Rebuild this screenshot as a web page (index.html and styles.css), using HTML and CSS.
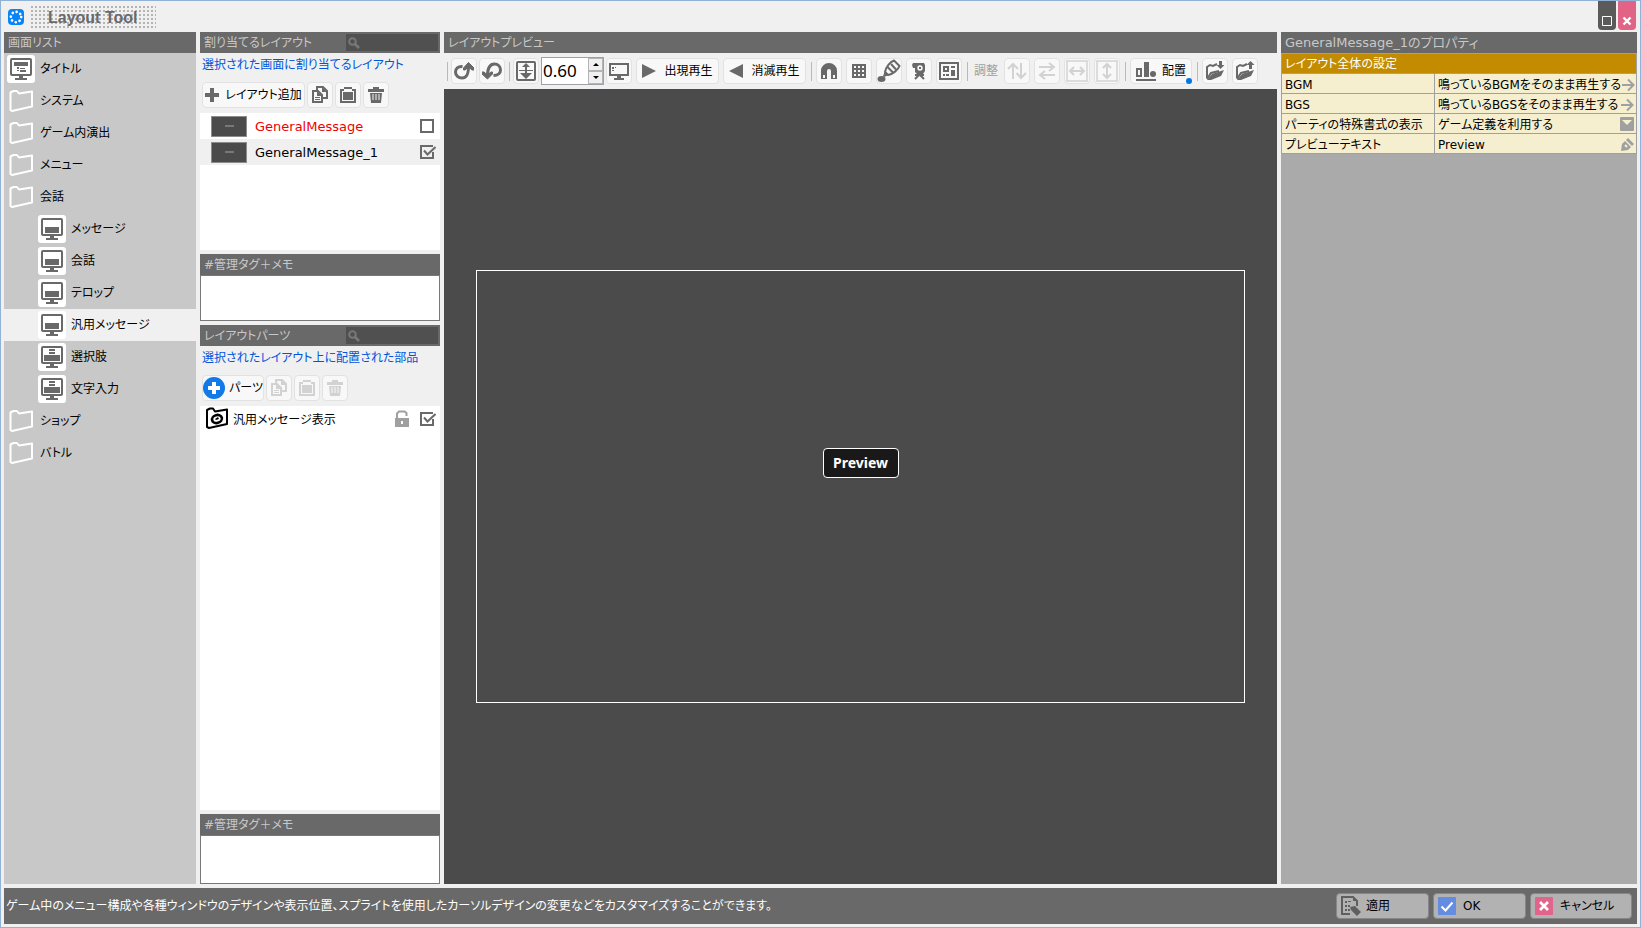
FILE: index.html
```html
<!DOCTYPE html>
<html lang="ja">
<head>
    <meta charset="UTF-8">
    <meta name="viewport" content="width=device-width, initial-scale=1.0">
    <title>Layout Tool</title>
    <link rel="stylesheet" href="styles.css">
</head>
<body>

    <!-- Icon set -->
    <svg class="icon-defs" aria-hidden="true">
        <symbol id="i-folder" viewBox="0 0 24 24">
            <path d="M1.500 3.500l3-1.500h3.500l2 2.500 13-2v15L3 22l-1.500-1z" fill="none" stroke="currentColor" stroke-width="2" stroke-linejoin="round"/>
        </symbol>
        <symbol id="i-title" viewBox="0 0 24 24">
            <rect x="2" y="2" width="20" height="16" rx="1" fill="none" stroke="currentColor" stroke-width="2"/>
            <path d="M5 5h14v4H5zM8 10h2v2H8zM11 11h5v1h-5zM8 13h2v1H8zM11 13h6v2h-6zM10 19h4v2h4v2H6v-2h4z" fill="currentColor"/>
        </symbol>
        <symbol id="i-screen" viewBox="0 0 24 24">
            <rect x="2" y="2" width="20" height="16" rx="1" fill="none" stroke="currentColor" stroke-width="2"/>
            <path d="M5 10h14v6H5zM10 19h4v2h4v2H6v-2h4z" fill="currentColor"/>
        </symbol>
        <symbol id="i-choice" viewBox="0 0 24 24">
            <rect x="2" y="2" width="20" height="16" rx="1" fill="none" stroke="currentColor" stroke-width="2"/>
            <path d="M9 4h6v2H9zM9 7h6v2H9zM4 10h16v6H4zM10 19h4v2h4v2H6v-2h4z" fill="currentColor"/>
        </symbol>
        <symbol id="i-search" viewBox="0 0 12 12">
            <circle cx="4.500" cy="4.500" r="3.300" fill="none" stroke="currentColor" stroke-width="2"/>
            <path d="M7 7l4 4" stroke="currentColor" stroke-width="2.600"/>
        </symbol>
        <symbol id="i-plus" viewBox="0 0 14 14">
            <path d="M5 0h4v5h5v4H9v5H5V9H0V5h5z" fill="currentColor"/>
        </symbol>
        <symbol id="i-plus-round" viewBox="0 0 22 22">
            <circle cx="11" cy="11" r="11" fill="#127ae8"/>
            <path d="M9 5h4v4h4v4h-4v4H9v-4H5V9h4z" fill="#fff"/>
        </symbol>
        <symbol id="i-copy" viewBox="0 0 18 18">
            <path d="M6 6V1h6l4 4v7h-4" fill="none" stroke="currentColor" stroke-width="2"/>
            <path d="M11 1v5h5z" fill="currentColor"/>
            <path d="M2 5h5l4 4v7H2z" fill="#f8f8f8" stroke="currentColor" stroke-width="2"/>
            <path d="M6 5v5h5zM4 11h5v1H4zM4 13h5v1H4z" fill="currentColor"/>
        </symbol>
        <symbol id="i-paste" viewBox="0 0 18 18">
            <path d="M5 1h8v2h4v14H1V3h4zM3 5v10h12V5h-2V3H5v2z" fill="currentColor" fill-rule="evenodd"/>
            <path d="M4 6h10v8H4z" fill="currentColor"/>
        </symbol>
        <symbol id="i-trash" viewBox="0 0 18 18">
            <path d="M6 1h6v2h5v3H1V3h5zM3 7h12l-1 10H4z" fill="currentColor"/>
            <path d="M6 8v6M9 8v6M12 8v6" stroke="#f8f8f8" stroke-width="1"/>
        </symbol>
        <symbol id="i-part" viewBox="0 0 24 24">
            <path d="M2 3l3-1.500h3l2 3 12-2v14.500L4 21l-2-1z" fill="none" stroke="currentColor" stroke-width="2" stroke-linejoin="round"/>
            <ellipse cx="12" cy="12" rx="5" ry="4" transform="rotate(-15 12 12)" fill="none" stroke="currentColor" stroke-width="2.600"/>
            <path d="M10 12l3-2 1 2-3 1z" fill="currentColor"/>
        </symbol>
        <symbol id="i-unlock" viewBox="0 0 16 18">
            <path d="M3 9V3.500L5 1.500h5.500L12.500 3v3" fill="none" stroke="currentColor" stroke-width="2"/>
            <path d="M1 8h14v9H1z" fill="currentColor"/>
            <path d="M7 11h2v3H7z" fill="#fff"/>
        </symbol>
        <symbol id="i-undo" viewBox="0 0 20 20">
            <path d="M8.500 5.500C4 5 1.500 8 1.500 11c0 3.500 3 6 6.500 6 5 0 6.500-4 6.500-12" fill="none" stroke="currentColor" stroke-width="3"/>
            <path d="M9.500 9V7l5-5.500L20 7v2h-2l-3.500-3L11 9z" fill="currentColor" stroke="currentColor"/>
        </symbol>
        <symbol id="i-redo" viewBox="0 0 20 20">
            <path d="M5.500 15c0-8 2-12 7-12 3.500 0 6 2.500 6 6 0 3-2.500 5.500-7 5.500" fill="none" stroke="currentColor" stroke-width="3"/>
            <path d="M0 11h2l3.500 3L9 11h1.500v2l-5 5L0 13z" fill="currentColor" stroke="currentColor"/>
        </symbol>
        <symbol id="i-fit" viewBox="0 0 20 20">
            <rect x="1" y="1" width="18" height="18" rx="1" fill="none" stroke="currentColor" stroke-width="2"/>
            <path d="M10 2l4 4h-3v3h6v1H3V9h6V6H6zM9 10h2v2h5l-6 6-6-6h5z" fill="currentColor"/>
        </symbol>
        <symbol id="i-monitor" viewBox="0 0 20 20">
            <path d="M1 3h18v11H1z" fill="none" stroke="currentColor" stroke-width="2"/>
            <path d="M3 6h2v2H3zM6 6h1v1H6zM3 9h2v1H3zM8 15h4v2h3v2H5v-2h3z" fill="currentColor"/>
        </symbol>
        <symbol id="i-play" viewBox="0 0 14 14"><path d="M0 0l14 7-14 7z" fill="currentColor"/></symbol>
        <symbol id="i-back" viewBox="0 0 14 14"><path d="M14 0L0 7l14 7z" fill="currentColor"/></symbol>
        <symbol id="i-magnet" viewBox="0 0 18 18">
            <path d="M1 17V8.500a8 7.500 0 0 1 16 0V17h-6V9a2 2 0 0 0-4 0v8z" fill="currentColor"/>
            <path d="M3 13h2v3H3zM13 13h2v3h-2z" fill="#f8f8f8"/>
        </symbol>
        <symbol id="i-grid" viewBox="0 0 14 14">
            <path d="M0 0h14v14H0zM2 2v2h2V2zM6 2v2h2V2zM10 2v2h2V2zM2 6v2h2V6zM6 6v2h2V6zM10 6v2h2V6zM2 10v2h2v-2zM6 10v2h2v-2zM10 10v2h2v-2z" fill="currentColor" fill-rule="evenodd"/>
        </symbol>
        <symbol id="i-brush" viewBox="0 0 24 24">
            <path d="M8 13c1-5 5-10 9-11.500L22.500 7C21 11 16 15 11 16z" fill="none" stroke="currentColor" stroke-width="2" stroke-linejoin="round"/>
            <path d="M10.500 8l5.500 5.500M14 5l5 5.500" stroke="currentColor" stroke-width="2"/>
            <path d="M8 12l4 4-5 2-1-1z" fill="currentColor"/>
            <ellipse cx="4.500" cy="20" rx="4" ry="3" fill="currentColor"/>
        </symbol>
        <symbol id="i-person" viewBox="0 0 18 18">
            <path d="M3 1h11l1 2v6l-2 3H7L5 10V6H3L2 3z" fill="currentColor"/>
            <circle cx="10" cy="6" r="2.700" fill="#f8f8f8"/>
            <path d="M9 5h2v2H9z" fill="currentColor"/>
            <path d="M5 17l4-4h1l4 4M5 13h9" fill="none" stroke="currentColor" stroke-width="2"/>
        </symbol>
        <symbol id="i-layout" viewBox="0 0 20 18">
            <path d="M1 1h18v16H1z" fill="none" stroke="currentColor" stroke-width="2"/>
            <path d="M4 4h6v6H4zM6 6v2h2V6z" fill="currentColor" fill-rule="evenodd"/>
            <path d="M12 4h4v2h-4zM12 8h4v6h-4zM4 12h2v2H4zM7 12h3v2H7z" fill="currentColor"/>
        </symbol>
        <symbol id="i-updown" viewBox="0 0 20 18">
            <path d="M6 17V2M1 7l5-5 5 5M14 1v15M9.500 11l4.500 5 5-5" fill="none" stroke="currentColor" stroke-width="2"/>
        </symbol>
        <symbol id="i-leftright" viewBox="0 0 18 18">
            <path d="M1 5h15M11 1l5 4-5 4M17 13H2M7 9l-5 4 5 4" fill="none" stroke="currentColor" stroke-width="2"/>
        </symbol>
        <symbol id="i-stretch-h" viewBox="0 0 24 24">
            <path d="M2 2h20v20H2z" fill="none" stroke="currentColor" stroke-width="1.500"/>
            <path d="M5 12h14M9 8l-4 4 4 4M15 8l4 4-4 4" fill="none" stroke="currentColor" stroke-width="2"/>
        </symbol>
        <symbol id="i-stretch-v" viewBox="0 0 24 24">
            <path d="M2 2h20v20H2z" fill="none" stroke="currentColor" stroke-width="1.500"/>
            <path d="M12 5v14M8 9l4-4 4 4M8 15l4 4 4-4" fill="none" stroke="currentColor" stroke-width="2"/>
        </symbol>
        <symbol id="i-align" viewBox="0 0 20 20">
            <path d="M0 18h20v2H0zM8 1h5v15H8zM0 7h6v9H0zM2 9v5h2V9z" fill="currentColor" fill-rule="evenodd"/>
            <circle cx="17" cy="13" r="3" fill="currentColor"/>
        </symbol>
        <symbol id="i-import" viewBox="0 0 20 20">
            <path d="M2 17V6l3-2 3 1 4-2M2 18l4-6 8-2" fill="none" stroke="currentColor" stroke-width="2"/>
            <path d="M2 19l5-6 12-4-3 6-10 4zM14 0h3v4h2.500l-4 4-4-4H14z" fill="currentColor"/>
        </symbol>
        <symbol id="i-export" viewBox="0 0 20 20">
            <path d="M2 17V6l3-2 3 1 4-2M2 18l4-6 8-2" fill="none" stroke="currentColor" stroke-width="2"/>
            <path d="M2 19l5-6 12-4-3 6-10 4zM14 8h3V4h2.500l-4-4-4 4H14z" fill="currentColor"/>
        </symbol>
        <symbol id="i-arrow" viewBox="0 0 14 14">
            <path d="M1 7h11M7 1.500L12.500 7 7 12.500" fill="none" stroke="currentColor" stroke-width="2"/>
        </symbol>
        <symbol id="i-pen" viewBox="0 0 14 14">
            <path d="M1 13l1-7 3-3 6 6-3 3z" fill="currentColor"/>
            <path d="M6 2l2-2 6 6-2 2z" fill="currentColor"/>
            <path d="M5 7l2 2" stroke="#f5efd0" stroke-width="2"/>
        </symbol>
        <symbol id="i-apply" viewBox="0 0 20 20">
            <path d="M9 18H1V1h11l4 4v5" fill="none" stroke="currentColor" stroke-width="2"/>
            <path d="M12 1v4h4zM4 5h2v2H4zM7 5h3v1H7zM4 9h2v2H4zM7 9h2v2H7zM4 13h2v2H4zM7 13h2v2H7zM9 11l5-1 6 6-4 4-6-6z" fill="currentColor"/>
        </symbol>
        <symbol id="i-ok" viewBox="0 0 18 18">
            <rect width="18" height="18" rx="1" fill="#648ce1"/>
            <path d="M3.500 9.500l4 4 7-8" fill="none" stroke="#fff" stroke-width="2"/>
        </symbol>
        <symbol id="i-cancel" viewBox="0 0 18 18">
            <rect width="18" height="18" rx="1" fill="#e1648c"/>
            <path d="M5 5l8 8M13 5l-8 8" fill="none" stroke="#fff" stroke-width="2.600"/>
        </symbol>
    </svg>

    <div class="window">

        <!-- Title Bar -->
        <header class="title-bar">
            <svg class="app-icon" viewBox="0 0 16 16">
                <rect width="16" height="16" rx="4" fill="#0a84f5"/>
                <circle cx="8" cy="8" r="5.200" fill="none" stroke="#fff" stroke-width="2.600" stroke-linecap="round" stroke-dasharray="0.100 3.984"/>
            </svg>
            <h1 class="app-title">Layout Tool</h1>
            <div class="window-controls">
                <button class="window-btn" aria-label="最大化">
                    <svg viewBox="0 0 10 10"><path d="M.500.500h9v9h-9z" fill="none" stroke="#fff"/></svg>
                </button>
                <button class="window-btn close" aria-label="閉じる">
                    <svg viewBox="0 0 10 10"><path d="M1.500 1.500l7 7M8.500 1.500l-7 7" stroke="#fff" stroke-width="2.400"/></svg>
                </button>
            </div>
        </header>

        <main class="workspace">

            <!-- Screen List -->
            <nav class="panel screen-list">
                <h2 class="panel-header">画面リスト</h2>
                <ul class="tree">
                    <li><button class="tree-item"><svg class="tree-icon boxed"><use href="#i-title"/></svg>タイトル</button></li>
                    <li><button class="tree-item"><svg class="tree-icon"><use href="#i-folder"/></svg>システム</button></li>
                    <li><button class="tree-item"><svg class="tree-icon"><use href="#i-folder"/></svg>ゲーム内演出</button></li>
                    <li><button class="tree-item"><svg class="tree-icon"><use href="#i-folder"/></svg>メニュー</button></li>
                    <li><button class="tree-item"><svg class="tree-icon"><use href="#i-folder"/></svg>会話</button>
                        <ul class="tree-children">
                            <li><button class="tree-item"><svg class="tree-icon boxed"><use href="#i-screen"/></svg>メッセージ</button></li>
                            <li><button class="tree-item"><svg class="tree-icon boxed"><use href="#i-screen"/></svg>会話</button></li>
                            <li><button class="tree-item"><svg class="tree-icon boxed"><use href="#i-screen"/></svg>テロップ</button></li>
                            <li><button class="tree-item selected"><svg class="tree-icon boxed"><use href="#i-screen"/></svg>汎用メッセージ</button></li>
                            <li><button class="tree-item"><svg class="tree-icon boxed"><use href="#i-choice"/></svg>選択肢</button></li>
                            <li><button class="tree-item"><svg class="tree-icon boxed"><use href="#i-choice"/></svg>文字入力</button></li>
                        </ul>
                    </li>
                    <li><button class="tree-item"><svg class="tree-icon"><use href="#i-folder"/></svg>ショップ</button></li>
                    <li><button class="tree-item"><svg class="tree-icon"><use href="#i-folder"/></svg>バトル</button></li>
                </ul>
            </nav>

            <div class="layout-column">

                <!-- Assigned Layouts -->
                <section class="panel assigned">
                    <div class="panel-header">
                        <h2>割り当てるレイアウト</h2>
                        <label class="search"><svg><use href="#i-search"/></svg><input type="text" aria-label="レイアウトを検索"></label>
                    </div>
                    <p class="hint">選択された画面に割り当てるレイアウト</p>
                    <div class="list-tools">
                        <button class="tool-btn add-btn"><svg class="icon-14"><use href="#i-plus"/></svg>レイアウト追加</button>
                        <button class="tool-btn" aria-label="コピー"><svg class="icon-18"><use href="#i-copy"/></svg></button>
                        <button class="tool-btn" aria-label="貼り付け"><svg class="icon-18"><use href="#i-paste"/></svg></button>
                        <button class="tool-btn" aria-label="削除"><svg class="icon-18"><use href="#i-trash"/></svg></button>
                    </div>
                    <ul class="item-list">
                        <li class="layout-item unused">
                            <span class="thumb"></span>
                            <label for="layout1">GeneralMessage</label>
                            <input type="checkbox" id="layout1">
                        </li>
                        <li class="layout-item selected">
                            <span class="thumb"></span>
                            <label for="layout2">GeneralMessage_1</label>
                            <input type="checkbox" id="layout2" checked>
                        </li>
                    </ul>
                </section>

                <section class="panel memo">
                    <label class="panel-header" for="layoutMemo">#管理タグ＋メモ</label>
                    <textarea id="layoutMemo"></textarea>
                </section>

                <!-- Layout Parts -->
                <section class="panel parts">
                    <div class="panel-header">
                        <h2>レイアウトパーツ</h2>
                        <label class="search"><svg><use href="#i-search"/></svg><input type="text" aria-label="パーツを検索"></label>
                    </div>
                    <p class="hint">選択されたレイアウト上に配置された部品</p>
                    <div class="list-tools">
                        <button class="tool-btn part-btn"><svg class="icon-22"><use href="#i-plus-round"/></svg>パーツ</button>
                        <button class="tool-btn" aria-label="コピー" disabled><svg class="icon-18"><use href="#i-copy"/></svg></button>
                        <button class="tool-btn" aria-label="貼り付け" disabled><svg class="icon-18"><use href="#i-paste"/></svg></button>
                        <button class="tool-btn" aria-label="削除" disabled><svg class="icon-18"><use href="#i-trash"/></svg></button>
                    </div>
                    <ul class="item-list">
                        <li class="part-item">
                            <svg class="icon-24"><use href="#i-part"/></svg>
                            <label for="part1">汎用メッセージ表示</label>
                            <svg class="lock"><use href="#i-unlock"/></svg>
                            <input type="checkbox" id="part1" checked>
                        </li>
                    </ul>
                </section>

                <section class="panel memo parts-memo">
                    <label class="panel-header" for="partsMemo">#管理タグ＋メモ</label>
                    <textarea id="partsMemo"></textarea>
                </section>
            </div>

            <!-- Layout Preview -->
            <section class="panel preview">
                <h2 class="panel-header">レイアウトプレビュー</h2>
                <div class="toolbar">
                    <div class="tool-group tight">
                        <button class="tool-btn" aria-label="元に戻す"><svg class="icon-20"><use href="#i-undo"/></svg></button>
                        <button class="tool-btn" aria-label="やり直す"><svg class="icon-20"><use href="#i-redo"/></svg></button>
                    </div>
                    <div class="tool-group tight">
                        <button class="tool-btn" aria-label="全体表示"><svg class="icon-20"><use href="#i-fit"/></svg></button>
                        <div class="spinner">
                            <input type="text" value="0.60" aria-label="表示倍率">
                            <div class="spinner-buttons">
                                <button class="up" aria-label="拡大"></button>
                                <button class="down" aria-label="縮小"></button>
                            </div>
                        </div>
                        <button class="tool-btn" aria-label="画面サイズ"><svg class="icon-20"><use href="#i-monitor"/></svg></button>
                    </div>
                    <div class="tool-group play-group">
                        <button class="tool-btn play-btn"><svg class="icon-14"><use href="#i-play"/></svg>出現再生</button>
                        <button class="tool-btn play-btn"><svg class="icon-14"><use href="#i-back"/></svg>消滅再生</button>
                    </div>
                    <div class="tool-group">
                        <button class="tool-btn" aria-label="吸着"><svg class="icon-18"><use href="#i-magnet"/></svg></button>
                        <button class="tool-btn" aria-label="グリッド"><svg class="icon-14"><use href="#i-grid"/></svg></button>
                        <button class="tool-btn" aria-label="背景色"><svg class="icon-24"><use href="#i-brush"/></svg></button>
                        <button class="tool-btn" aria-label="キャラクター"><svg class="icon-18"><use href="#i-person"/></svg></button>
                        <button class="tool-btn" aria-label="表示範囲"><svg class="icon-20"><use href="#i-layout"/></svg></button>
                    </div>
                    <div class="tool-group">
                        <span class="tool-label">調整</span>
                        <button class="tool-btn" aria-label="上下反転" disabled><svg class="icon-20"><use href="#i-updown"/></svg></button>
                        <button class="tool-btn" aria-label="左右反転" disabled><svg class="icon-18"><use href="#i-leftright"/></svg></button>
                        <button class="tool-btn" aria-label="横に広げる" disabled><svg class="icon-24"><use href="#i-stretch-h"/></svg></button>
                        <button class="tool-btn" aria-label="縦に広げる" disabled><svg class="icon-24"><use href="#i-stretch-v"/></svg></button>
                    </div>
                    <div class="tool-group">
                        <button class="tool-btn align-btn"><svg class="icon-20"><use href="#i-align"/></svg>配置</button>
                    </div>
                    <div class="tool-group">
                        <button class="tool-btn" aria-label="読み込み"><svg class="icon-20"><use href="#i-import"/></svg></button>
                        <button class="tool-btn" aria-label="書き出し"><svg class="icon-20"><use href="#i-export"/></svg></button>
                    </div>
                </div>
                <div class="canvas">
                    <div class="screen-frame">
                        <div class="message-window">Preview</div>
                    </div>
                </div>
            </section>

            <!-- Properties -->
            <aside class="panel properties">
                <h2 class="panel-header">GeneralMessage_1のプロパティ</h2>
                <table class="property-table">
                    <colgroup>
                        <col class="name-col">
                        <col>
                    </colgroup>
                    <thead>
                        <tr><th colspan="2">レイアウト全体の設定</th></tr>
                    </thead>
                    <tbody>
                        <tr>
                            <td>BGM</td>
                            <td><button class="value">鳴っているBGMをそのまま再生する<svg class="icon-14"><use href="#i-arrow"/></svg></button></td>
                        </tr>
                        <tr>
                            <td>BGS</td>
                            <td><button class="value">鳴っているBGSをそのまま再生する<svg class="icon-14"><use href="#i-arrow"/></svg></button></td>
                        </tr>
                        <tr>
                            <td><label for="partyFormat">パーティの特殊書式の表示</label></td>
                            <td><select id="partyFormat" class="value"><option>ゲーム定義を利用する</option></select></td>
                        </tr>
                        <tr>
                            <td><label for="previewText">プレビューテキスト</label></td>
                            <td><div class="value"><input type="text" id="previewText" value="Preview"><svg class="icon-14"><use href="#i-pen"/></svg></div></td>
                        </tr>
                    </tbody>
                </table>
            </aside>
        </main>

        <!-- Status Bar -->
        <footer class="status-bar">
            <p>ゲーム中のメニュー構成や各種ウィンドウのデザインや表示位置、スプライトを使用したカーソルデザインの変更などをカスタマイズすることができます。</p>
            <button class="dialog-btn apply"><svg class="icon-20"><use href="#i-apply"/></svg>適用</button>
            <button class="dialog-btn"><svg class="icon-18"><use href="#i-ok"/></svg>OK</button>
            <button class="dialog-btn cancel"><svg class="icon-18"><use href="#i-cancel"/></svg>キャンセル</button>
        </footer>
    </div>

</body>
</html>
```

FILE: styles.css
```css
/* General Styling */
* {
    box-sizing: border-box;
}

body {
    margin: 0;
    font-family: "DejaVu Sans", "Noto Sans CJK JP", sans-serif;
    font-size: 12px;
    line-height: 20px;
    font-feature-settings: "palt";
    color: #000;
}

h1, h2, p, ul {
    margin: 0;
    padding: 0;
    font-size: inherit;
    font-weight: normal;
}

ul {
    list-style: none;
}

button, input, select, textarea {
    font: inherit;
    font-feature-settings: inherit;
    color: inherit;
    margin: 0;
    padding: 0;
    border: none;
    border-radius: 0;
    background: none;
}

svg {
    display: block;
    flex: none;
}

.icon-defs {
    display: none;
}

.icon-14 { width: 14px; height: 14px; }
.icon-18 { width: 18px; height: 18px; }
.icon-20 { width: 20px; height: 20px; }
.icon-22 { width: 22px; height: 22px; }
.icon-24 { width: 24px; height: 24px; }

/* Window */
.window {
    display: flex;
    flex-direction: column;
    height: 100vh;
    padding: 0 3px 3px;
    border: 1px solid #91b1d7;
    background-color: #f0f0f0;
}

.title-bar {
    display: flex;
    flex: none;
    align-items: center;
    height: 31px;
    padding-left: 4px;
}

.app-icon {
    width: 16px;
    height: 16px;
    margin-right: 5px;
}

.app-title {
    padding: 2px 19px 0;
    font-family: "Liberation Sans", sans-serif;
    font-size: 16px;
    font-weight: bold;
    line-height: 20px;
    color: #696969;
    background: conic-gradient(#b4b4b4 25%, transparent 0) 0 0 / 4px 4px;
}

.window-controls {
    display: flex;
    align-self: flex-start;
    gap: 2px;
    margin-left: auto;
    padding-right: 1px;
}

.window-btn {
    display: flex;
    align-items: flex-end;
    justify-content: center;
    width: 18px;
    height: 29px;
    padding-bottom: 4px;
    border-radius: 0 0 4px 4px;
    background-color: #5a5a5a;
}

.window-btn.close {
    background-color: #e16487;
}

.window-btn svg {
    width: 10px;
    height: 10px;
}

/* Panels */
.workspace {
    display: grid;
    flex: 1;
    grid-template-columns: 192px 240px 1fr 356px;
    gap: 4px;
    min-height: 0;
}

.panel {
    display: flex;
    flex-direction: column;
    min-width: 0;
}

.panel-header {
    display: flex;
    flex: none;
    align-items: center;
    justify-content: space-between;
    height: 21px;
    padding: 0 2px 0 4px;
    color: #c8c8c8;
    background-color: #696969;
}

/* Screen List */
.screen-list {
    background-color: #c8c8c8;
}

.tree-item {
    display: flex;
    align-items: center;
    gap: 5px;
    width: 100%;
    height: 32px;
    padding-left: 3px;
    text-align: left;
}

.tree-children .tree-item {
    padding-left: 34px;
}

.tree-item.selected {
    background-color: #f0f0f0;
}

.tree-icon {
    width: 28px;
    height: 28px;
    padding: 2px;
    border-radius: 3px;
    color: #fff;
}

.tree-icon.boxed {
    color: #696969;
    background-color: #fff;
}

/* Layout Column */
.layout-column {
    display: flex;
    flex-direction: column;
    gap: 4px;
    min-height: 0;
}

.assigned {
    height: 218px;
}

.parts {
    flex: 1;
}

.memo {
    height: 67px;
}

.parts-memo {
    height: 70px;
}

.search {
    display: flex;
    align-items: center;
    width: 92px;
    height: 17px;
    padding-left: 2px;
    color: #787878;
    background-color: #505050;
}

.search svg {
    width: 12px;
    height: 12px;
}

.search input {
    flex: 1;
    min-width: 0;
}

.hint {
    height: 24px;
    padding-left: 2px;
    line-height: 24px;
    color: #0055dc;
}

.list-tools {
    display: flex;
    gap: 2px;
    height: 36px;
    padding: 5px 2px 0;
}

.tool-btn {
    display: flex;
    flex: none;
    align-items: center;
    justify-content: center;
    width: 26px;
    height: 26px;
    border: 1px solid #e2e2e2;
    border-radius: 4px;
    color: #000;
    background-color: #f8f8f8;
}

.tool-btn svg {
    color: #696969;
}

.tool-btn:disabled svg {
    color: #d2d2d2;
}

.add-btn {
    gap: 6px;
    width: 103px;
}

.part-btn {
    gap: 4px;
    width: 62px;
}

.item-list {
    flex: 1;
    background-color: #fff;
}

.layout-item {
    display: flex;
    align-items: center;
    gap: 8px;
    height: 26px;
    padding: 0 4px 0 11px;
    font-size: 13px;
}

.layout-item.selected {
    background-color: #f0f0f0;
}

.layout-item.unused {
    color: #f00000;
}

.layout-item label, .part-item label {
    flex: 1;
    padding-top: 2px;
}

.thumb {
    width: 36px;
    height: 21px;
    border: 1px solid #8c8c8c;
    background: linear-gradient(#787878, #787878) center 8px / 9px 2px no-repeat #4b4b4b;
}

.part-item {
    display: flex;
    align-items: center;
    gap: 4px;
    height: 26px;
    padding: 0 4px 0 5px;
}

.lock {
    width: 16px;
    height: 18px;
    margin-right: 4px;
    color: #a0a0a0;
}

input[type="checkbox"] {
    appearance: none;
    width: 18px;
    height: 18px;
    background: url("data:image/svg+xml,%3Csvg xmlns='http://www.w3.org/2000/svg' viewBox='0 0 18 18'%3E%3Cpath d='M3 3h12v12H3z' fill='none' stroke='%23696969' stroke-width='2'/%3E%3C/svg%3E") center no-repeat;
}

input[type="checkbox"]:checked {
    background-image: url("data:image/svg+xml,%3Csvg xmlns='http://www.w3.org/2000/svg' viewBox='0 0 18 18'%3E%3Cpath d='M15 9v6H3V3h12M6 7.500l3.500 4L17.500 4' fill='none' stroke='%23696969' stroke-width='2'/%3E%3C/svg%3E");
}

.memo textarea {
    flex: 1;
    border: 1px solid #787878;
    background-color: #fff;
    resize: none;
}

/* Preview Toolbar */
.toolbar {
    display: flex;
    flex: none;
    align-items: center;
    height: 36px;
    padding: 0 3px;
}

.tool-group {
    display: flex;
    align-items: center;
    gap: 4px;
    padding-right: 5px;
}

.tool-group::before {
    content: "";
    width: 1px;
    height: 19px;
    background-color: #b9b9b9;
}

.tool-group.tight {
    gap: 2px;
    padding-right: 4px;
}

.tool-group.tight::before {
    margin-right: 1px;
}

.play-group::before {
    content: none;
}

.spinner {
    display: flex;
    width: 63px;
    height: 28px;
    border: 1px solid #a0a0a8;
    background-color: #fff;
}

.spinner input {
    flex: 1;
    min-width: 0;
    padding-left: 1px;
    font-family: "Noto Sans", sans-serif;
    font-size: 17px;
}

.spinner-buttons {
    display: flex;
    flex-direction: column;
    width: 15px;
}

.spinner-buttons button {
    display: flex;
    flex: 1;
    align-items: center;
    justify-content: center;
    border: 1px solid #b4b4b4;
    background-color: #f0f0f0;
}

.spinner-buttons button::before {
    content: "";
    border: 3px solid transparent;
}

.spinner-buttons .up::before {
    border-top: none;
    border-bottom-color: #000;
}

.spinner-buttons .down::before {
    border-bottom: none;
    border-top-color: #000;
}

.play-btn {
    gap: 8px;
    width: 83px;
}

.tool-label {
    padding: 0 2px;
    color: #a0a0a0;
}

.align-btn {
    position: relative;
    gap: 6px;
    width: 62px;
}

.align-btn::after {
    content: "";
    position: absolute;
    right: -1px;
    bottom: -1px;
    width: 6px;
    height: 6px;
    border-radius: 50%;
    background-color: #0078e1;
}

/* Preview Canvas */
.canvas {
    display: flex;
    flex: 1;
    align-items: center;
    justify-content: center;
    padding: 0 32px;
    background-color: #4b4b4b;
}

.screen-frame {
    position: relative;
    width: 100%;
    aspect-ratio: 16 / 9;
    border: 1px solid #fff;
}

.message-window {
    position: absolute;
    top: 41%;
    left: 50%;
    width: 76px;
    margin-left: -38px;
    border: 1px solid #fff;
    border-radius: 4px;
    font-family: "Noto Sans", sans-serif;
    font-size: 14px;
    font-weight: bold;
    line-height: 28px;
    text-align: center;
    color: #fff;
    background-color: #191919;
}

/* Properties */
.properties {
    background-color: #aaa;
}

.properties .panel-header {
    font-size: 13px;
}

.property-table {
    width: 100%;
    border-collapse: collapse;
    table-layout: fixed;
}

.name-col {
    width: 153px;
}

.property-table th, .property-table td {
    height: 20px;
    padding: 3px 2px 0 3px;
    border: 1px solid #a0a0a0;
    line-height: 16px;
    text-align: left;
    white-space: nowrap;
    background-color: #f5efd0;
}

.property-table th {
    padding-top: 1px;
    font-weight: normal;
    line-height: 18px;
    color: #fff;
    background-color: #c38c00;
}

.value {
    display: flex;
    align-items: center;
    justify-content: space-between;
    width: 100%;
    height: 16px;
}

.value svg {
    color: #a0a0a0;
}

.value input {
    flex: 1;
    min-width: 0;
}

select.value {
    appearance: none;
    background: url("data:image/svg+xml,%3Csvg xmlns='http://www.w3.org/2000/svg' width='14' height='14' viewBox='0 0 14 14'%3E%3Crect width='14' height='14' rx='1' fill='%23a0a0a0'/%3E%3Cpath d='M2 3h10L7 8z' fill='%23f5efd0'/%3E%3C/svg%3E") right top no-repeat;
}

/* Status Bar */
.status-bar {
    display: flex;
    flex: none;
    align-items: center;
    gap: 4px;
    height: 36px;
    margin-top: 4px;
    padding: 0 5px 0 2px;
    background-color: #696969;
}

.status-bar p {
    flex: 1;
    color: #fff;
}

.dialog-btn {
    display: flex;
    align-items: center;
    gap: 7px;
    width: 93px;
    height: 26px;
    padding-left: 4px;
    border: 1px solid #878787;
    border-radius: 4px;
    background-color: #b2b2b2;
}

.dialog-btn.apply {
    gap: 5px;
}

.dialog-btn.apply svg {
    color: #5f5f5f;
}

.dialog-btn.cancel {
    width: 102px;
}
```
